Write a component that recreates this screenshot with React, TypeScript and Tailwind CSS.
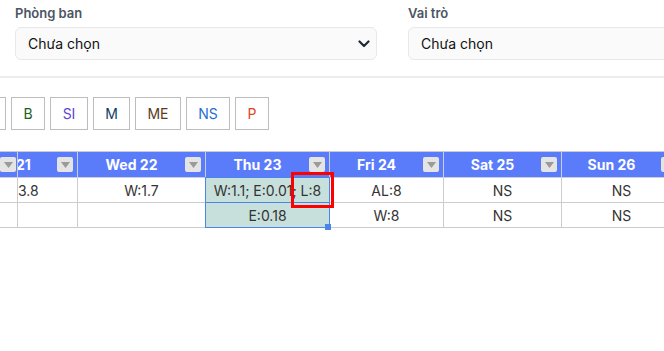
import type { ReactNode } from "react";

const codes: { label: string; width: string; color: string }[] = [
  { label: "B", width: "w-[34px]", color: "text-[#1b5e20]" },
  { label: "SI", width: "w-[38px]", color: "text-[#5b45d6]" },
  { label: "M", width: "w-[37px]", color: "text-[#0d3b66]" },
  { label: "ME", width: "w-[46px]", color: "text-[#5d3a1a]" },
  { label: "NS", width: "w-[44px]", color: "text-[#1f6fd6]" },
  { label: "P", width: "w-[34px]", color: "text-[#e0461b]" },
];

const colWidths = "grid-cols-[18px_60px_128px_124px_114px_118px_120px]";

function Chevron() {
  return (
    <svg width="12" height="8" viewBox="0 0 12 8" fill="none">
      <path d="M1.5 1.5L6 6L10.5 1.5" stroke="#1f2937" strokeWidth="2.2" strokeLinecap="round" strokeLinejoin="round" />
    </svg>
  );
}

function FilterButton() {
  return (
    <span className="flex h-[15px] w-[16px] shrink-0 items-center justify-center rounded-[2px] bg-[#e4e4e4]">
      <svg width="9" height="6" viewBox="0 0 9 6">
        <path d="M0 0H9L4.5 6Z" fill="#9a9a9a" />
      </svg>
    </span>
  );
}

function Field({ label }: { label: string }) {
  return (
    <div className="w-[362px] shrink-0">
      <div className="h-[18px] text-[13px] leading-[18px] font-semibold text-[#4b5563]">{label}</div>
      <div className="mt-[5px] flex h-[33px] items-center justify-between rounded-[6px] border border-[#e8e8ea] bg-[#fafafa] pl-[12px] pr-[6px] text-[14px] text-[#111]">
        <span>Chưa chọn</span>
        <Chevron />
      </div>
    </div>
  );
}

function HeadCell({ children, first }: { children?: ReactNode; first?: boolean }) {
  return (
    <div className="flex h-[26px] items-center overflow-hidden border-r border-b border-[#c9cde0] bg-[#5b7cfa] pr-[4px]">
      <div className={`flex-1 truncate text-[14px] font-bold text-white ${first ? "text-left -ml-[2px]" : "text-center"}`}>
        {children}
      </div>
      <FilterButton />
    </div>
  );
}

function Cell({ children, selected, left }: { children?: ReactNode; selected?: boolean; left?: boolean }) {
  return (
    <div
      className={`flex h-[25px] items-center overflow-hidden whitespace-nowrap border-r border-b text-[14px] text-[#333] ${
        left ? "justify-start" : "justify-center"
      } ${selected ? "border-[#4a86e8] bg-[#c8e0dc]" : "border-[#cccccc] bg-white"}`}
    >
      {children}
    </div>
  );
}

export default function App() {
  return (
    <div className="relative h-[351px] w-[664px] overflow-hidden bg-white font-['Inter',sans-serif]">
      <div className="flex w-[820px] gap-[31px] border-b-2 border-[#ececec] px-[15px] pt-[4px] pb-[16px]">
        <Field label="Phòng ban" />
        <Field label="Vai trò" />
      </div>

      <div className="mt-[19px] -ml-[28px] flex gap-[5px]">
        <div className="h-[33px] w-[34px] border border-[#bdbdbd] bg-white" />
        {codes.map((code) => (
          <button
            key={code.label}
            type="button"
            className={`flex h-[33px] ${code.width} items-center justify-center border border-[#bdbdbd] bg-white text-[14px] ${code.color}`}
          >
            {code.label}
          </button>
        ))}
      </div>

      <div className="mt-[21px] w-[700px] border-t border-[#cccccc]">
        <div className={`grid ${colWidths}`}>
          <div className="flex h-[26px] items-center justify-end overflow-hidden border-r border-b border-[#c9cde0] bg-[#5b7cfa] pr-[5px]">
            <span className="-mr-[4px]">
              <FilterButton />
            </span>
          </div>
          <HeadCell first>21</HeadCell>
          <HeadCell>Wed 22</HeadCell>
          <HeadCell>Thu 23</HeadCell>
          <HeadCell>Fri 24</HeadCell>
          <HeadCell>Sat 25</HeadCell>
          <HeadCell>Sun 26</HeadCell>

          <Cell />
          <Cell left>3.8</Cell>
          <Cell>W:1.7</Cell>
          <Cell selected>W:1.1; E:0.01; L:8</Cell>
          <Cell>AL:8</Cell>
          <Cell>NS</Cell>
          <Cell>NS</Cell>

          <Cell />
          <Cell />
          <Cell />
          <Cell selected>E:0.18</Cell>
          <Cell>W:8</Cell>
          <Cell>NS</Cell>
          <Cell>NS</Cell>
        </div>
      </div>

      {/* selection range outline */}
      <div className="pointer-events-none absolute left-[205px] top-[177px] h-[51px] w-[125px] border border-[#4a86e8]" />
      <div className="absolute left-[325px] top-[224px] h-[6px] w-[6px] bg-[#4a86e8]" />
      {/* highlight box */}
      <div className="pointer-events-none absolute left-[291px] top-[172px] h-[36px] w-[43px] border-[3px] border-[#ff0000]" />
    </div>
  );
}
